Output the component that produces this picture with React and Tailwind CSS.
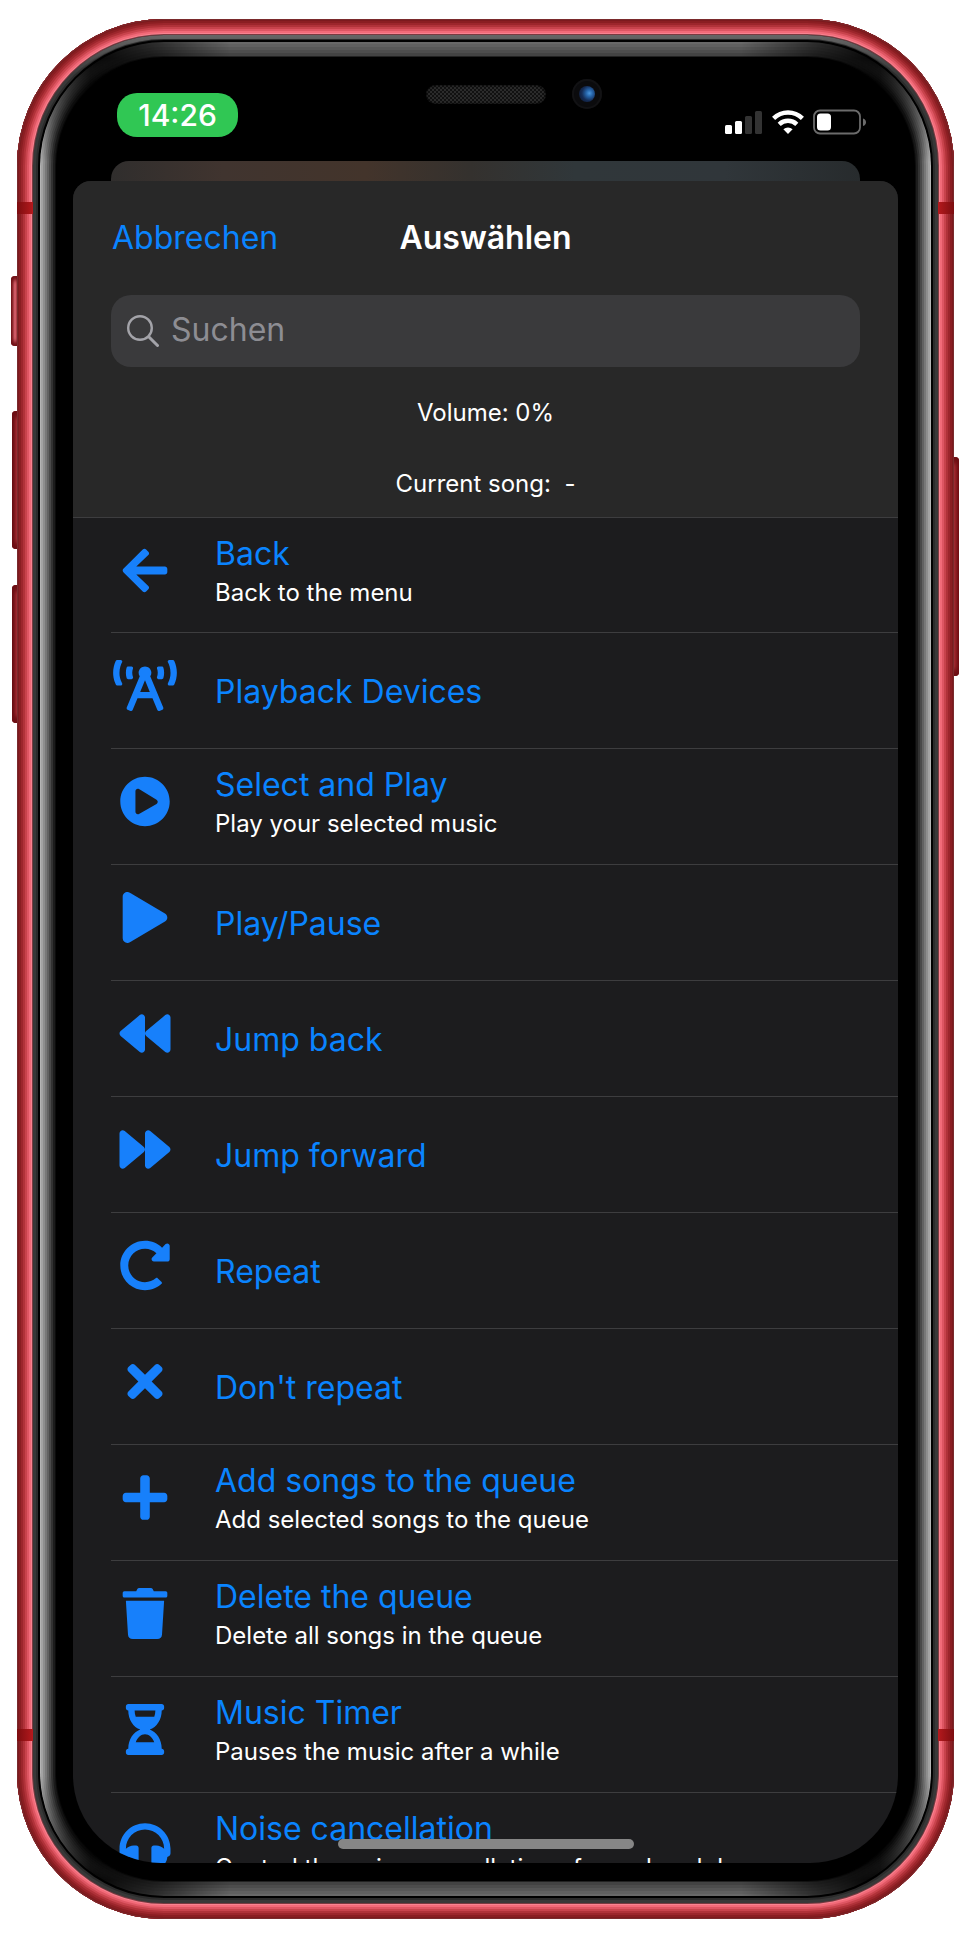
import {
  FaArrowLeft,
  FaBroadcastTower,
  FaPlayCircle,
  FaPlay,
  FaBackward,
  FaForward,
  FaRedoAlt,
  FaTimes,
  FaPlus,
  FaTrash,
  FaHourglassHalf,
  FaHeadphones,
} from "react-icons/fa";

const items = [
  { title: "Back", note: "Back to the menu", Icon: FaArrowLeft },
  { title: "Playback Devices", Icon: FaBroadcastTower },
  { title: "Select and Play", note: "Play your selected music", Icon: FaPlayCircle },
  { title: "Play/Pause", Icon: FaPlay },
  { title: "Jump back", Icon: FaBackward },
  { title: "Jump forward", Icon: FaForward },
  { title: "Repeat", Icon: FaRedoAlt },
  { title: "Don't repeat", Icon: FaTimes },
  { title: "Add songs to the queue", note: "Add selected songs to the queue", Icon: FaPlus },
  { title: "Delete the queue", note: "Delete all songs in the queue", Icon: FaTrash },
  { title: "Music Timer", note: "Pauses the music after a while", Icon: FaHourglassHalf },
  { title: "Noise cancellation", note: "Control the noise cancellation of your headphones", Icon: FaHeadphones },
];

function Frame() {
  return (
    <div aria-hidden="true">
      {/* Side buttons */}
      <div className="absolute top-[257px] -left-[6px] h-[70px] w-2 rounded-l-sm bg-linear-to-r from-[#7d1a20] via-[#e8707c] to-[#8d1d24] shadow-[inset_0_4px_4px_#6d0f14,inset_0_-4px_4px_#6d0f14]" />
      <div className="absolute top-[392px] -left-[5px] h-[138px] w-2 rounded-l-sm bg-linear-to-r from-[#5d0c11] via-[#a32a30] to-[#e06a70] shadow-[inset_0_6px_5px_#6d0f14,inset_0_-6px_5px_#6d0f14]" />
      <div className="absolute top-[566px] -left-[5px] h-[138px] w-2 rounded-l-sm bg-linear-to-r from-[#5d0c11] via-[#a32a30] to-[#e06a70] shadow-[inset_0_6px_5px_#6d0f14,inset_0_-6px_5px_#6d0f14]" />
      <div className="absolute top-[438px] -right-[5px] h-[219px] w-2 rounded-r-sm bg-linear-to-l from-[#7d0f15] via-[#a32a30] to-[#e06a70] shadow-[inset_0_6px_5px_#6d0f14,inset_0_-6px_5px_#6d0f14]" />
      {/* Aluminium band */}
      <div className="absolute inset-0 rounded-[147px] bg-black shadow-[inset_0_0_0_1px_#7a2a2c,inset_0_0_0_2px_#7c1a1e,inset_0_0_0_4px_#8a1e22,inset_0_0_0_6px_#9c262c,inset_0_0_0_8px_#b03239,inset_0_0_0_10px_#c8434c,inset_0_0_0_12px_#de5663,inset_0_0_0_14px_#f26b79,inset_0_0_0_15px_#f88391,inset_0_0_0_16px_#7a3a40,inset_0_0_0_19px_#383838,inset_0_0_0_21px_#2b2b2b]" />
      <div className="absolute inset-x-0 top-[183px] flex h-3 justify-between">
        <span className="w-4 bg-linear-to-r from-[#7c0d10] to-[#b5191d]" />
        <span className="w-4 bg-linear-to-l from-[#7c0d10] to-[#b5191d]" />
      </div>
      <div className="absolute inset-x-0 bottom-[178px] flex h-3 justify-between">
        <span className="w-4 bg-linear-to-r from-[#7c0d10] to-[#b5191d]" />
        <span className="w-4 bg-linear-to-l from-[#7c0d10] to-[#b5191d]" />
      </div>
      {/* Lighter lip along the top edge */}
      <div className="absolute inset-4 rounded-[131px] shadow-[inset_0_0_0_4px_#666666] [mask-image:linear-gradient(to_bottom,black,transparent_40px)]" />
      {/* Bezel reflections: long sides, then top and bottom */}
      <div className="absolute inset-[23px] rounded-[124px] shadow-[inset_0_0_0_1px_#b4b4b4,inset_0_0_0_3px_#a3a3a3,inset_0_0_0_5px_#8e8e8e,inset_0_0_0_7px_#787878,inset_0_0_0_9px_#626262,inset_0_0_0_11px_#4a4a4a,inset_0_0_0_13px_#323232,inset_0_0_0_15px_#1c1c1c,inset_0_0_0_16px_#0c0c0c] [mask-image:linear-gradient(to_bottom,transparent_16px,black_120px,black_calc(100%-120px),transparent_calc(100%-16px))]" />
      <div className="absolute inset-[23px] rounded-[124px] shadow-[inset_0_0_0_2px_#686868,inset_0_0_0_5px_#606060,inset_0_0_0_8px_#575757,inset_0_0_0_11px_#4d4d4d,inset_0_0_0_14px_#434343,inset_0_0_0_15px_#222222] [mask-image:linear-gradient(to_right,transparent_50px,rgba(0,0,0,0.4)_110px,black_190px,black_calc(100%-190px),rgba(0,0,0,0.4)_calc(100%-110px),transparent_calc(100%-50px))]" />
      {/* Speaker and camera */}
      <div className="absolute inset-x-0 top-[66px] flex justify-center">
        <div className="h-[19px] w-[120px] rounded-full bg-[#1d1d1d] bg-[repeating-conic-gradient(#2b2b2b_0_25%,#111111_0_50%)] bg-[length:4px_4px] shadow-[inset_0_0_3px_#000000]" />
      </div>
      <div className="absolute top-[60px] left-1/2 ml-[86px] flex size-[30px] items-center justify-center rounded-full bg-[#0b0b0d] shadow-[inset_0_0_0_2px_#121214]">
        <div className="size-4 rounded-full bg-[radial-gradient(circle_at_65%_45%,#4a96dc_0,#2563a8_25%,#152c55_55%,#0b1228_100%)]" />
      </div>
    </div>
  );
}

function StatusBar() {
  return (
    <div className="flex h-[86px] shrink-0 items-start justify-between pr-8 pl-11">
      <time className="mt-[18px] flex h-11 w-[121px] items-center justify-center rounded-[20px] bg-[#30c754] text-[30px] leading-8 font-medium text-white">
        14:26
      </time>
      <div className="mt-[34px] flex items-center">
        <svg className="mr-[10px]" width="37" height="24" viewBox="0 0 37 24" aria-label="Signal">
          <rect x="0" y="15" width="7" height="9" rx="1.5" fill="#fff" />
          <rect x="10" y="11" width="7" height="13" rx="1.5" fill="#fff" />
          <rect x="20" y="6" width="7" height="18" rx="1.5" fill="#333" />
          <rect x="30" y="1" width="7" height="23" rx="1.5" fill="#333" />
        </svg>
        <svg className="mr-[9px]" width="32" height="24" viewBox="0 0 32 24" aria-label="WLAN" fill="none" stroke="#fff" strokeWidth="4.4">
          <path d="M1.600 8.400a20.400 20.400 0 0 1 28.800 0" />
          <path d="M7.200 14.400a12.600 12.600 0 0 1 17.600 0" />
          <path d="M16 24l-4.600-4.700a6.600 6.600 0 0 1 9.200 0z" fill="#fff" stroke="none" />
        </svg>
        <svg width="53" height="26" viewBox="0 0 53 26" aria-label="Batterie">
          <rect x="1" y="1.500" width="46" height="23" rx="6" fill="none" stroke="#6b6b6b" strokeWidth="1.8" />
          <rect x="4" y="4.500" width="14" height="17" rx="3.500" fill="#fff" />
          <path d="M50 9.500c4 1.200 4 6 0 7.500z" fill="#6b6b6b" />
        </svg>
      </div>
    </div>
  );
}

function SheetHeader() {
  return (
    <header className="shrink-0 border-b border-[#3d3d3f] bg-[#282828] px-[38px] pt-[37px] pb-[19px]">
      <div className="grid grid-cols-[1fr_auto_1fr] items-center leading-10">
        <button type="button" className="justify-self-start pl-px text-[32px] text-[#0a84ff]">
          Abbrechen
        </button>
        <h1 className="text-[32px] font-semibold text-white">Auswählen</h1>
      </div>
      <label className="mt-[37px] flex h-[72px] items-center gap-3 rounded-[20px] bg-[#3a3a3c] pl-4">
        <svg width="32" height="32" viewBox="0 0 32 32" fill="none" stroke="#a3a3a9" strokeLinecap="round" aria-hidden="true">
          <circle cx="13" cy="13" r="11.800" strokeWidth="2.400" />
          <path d="M22 22l8.500 8.500" strokeWidth="3" />
        </svg>
        <input
          type="search"
          aria-label="Suchen"
          placeholder="Suchen"
          className="min-w-0 flex-1 bg-transparent pb-0.5 text-[32px] leading-10 text-white outline-none placeholder:text-[#8d8d93]"
        />
      </label>
      <p className="mt-8 text-center text-[24px] leading-7 text-white">Volume: 0%</p>
      <p className="mt-[43px] text-center text-[24px] leading-7 whitespace-pre text-white">Current song:  -</p>
    </header>
  );
}

function Row({ title, note, Icon }) {
  return (
    <li className="ml-[38px] h-[116px] shrink-0 border-b border-[#3d3d3f] first:h-[115px]">
      <button type="button" className="flex h-full w-full gap-[38px] pl-[2px] text-left">
        <span className="flex h-[105px] items-center">
          <Icon className="h-[51px] w-16 text-[#1780fb]" aria-hidden="true" />
        </span>
        <span className={note ? "flex flex-col gap-[5px] pt-4" : "flex h-full flex-col justify-center pt-0.5"}>
          <span className="text-[32px] leading-10 text-[#0a84ff]">{title}</span>
          {note && <span className="text-[24px] leading-7 text-white">{note}</span>}
        </span>
      </button>
    </li>
  );
}

export default function App() {
  return (
    <div className="h-screen bg-white pt-[19px] pr-4 pb-[25px] pl-[17px] font-['Inter',sans-serif]">
      <div className="relative h-full">
        <Frame />
        <div className="relative h-full p-14">
          <main className="relative flex h-full flex-col overflow-hidden rounded-b-[88px]">
            <StatusBar />
            <div className="mx-[38px] h-5 shrink-0 rounded-t-[18px] bg-[linear-gradient(to_right,#302e2d,#40342f_15%,#43342b_34%,#34312e_48%,#30373a_62%,#30363a_82%,#272b2d)]" />
            <section className="flex min-h-0 flex-1 flex-col overflow-hidden rounded-t-[18px] bg-[#1c1c1e]">
              <SheetHeader />
              <ul className="flex min-h-0 flex-1 flex-col overflow-hidden">
                {items.map((item) => (
                  <Row key={item.title} {...item} />
                ))}
              </ul>
            </section>
            <div className="absolute inset-x-0 bottom-[14px] flex justify-center">
              <div className="h-[10px] w-[296px] rounded-full bg-[#868686]" />
            </div>
          </main>
        </div>
      </div>
    </div>
  );
}
